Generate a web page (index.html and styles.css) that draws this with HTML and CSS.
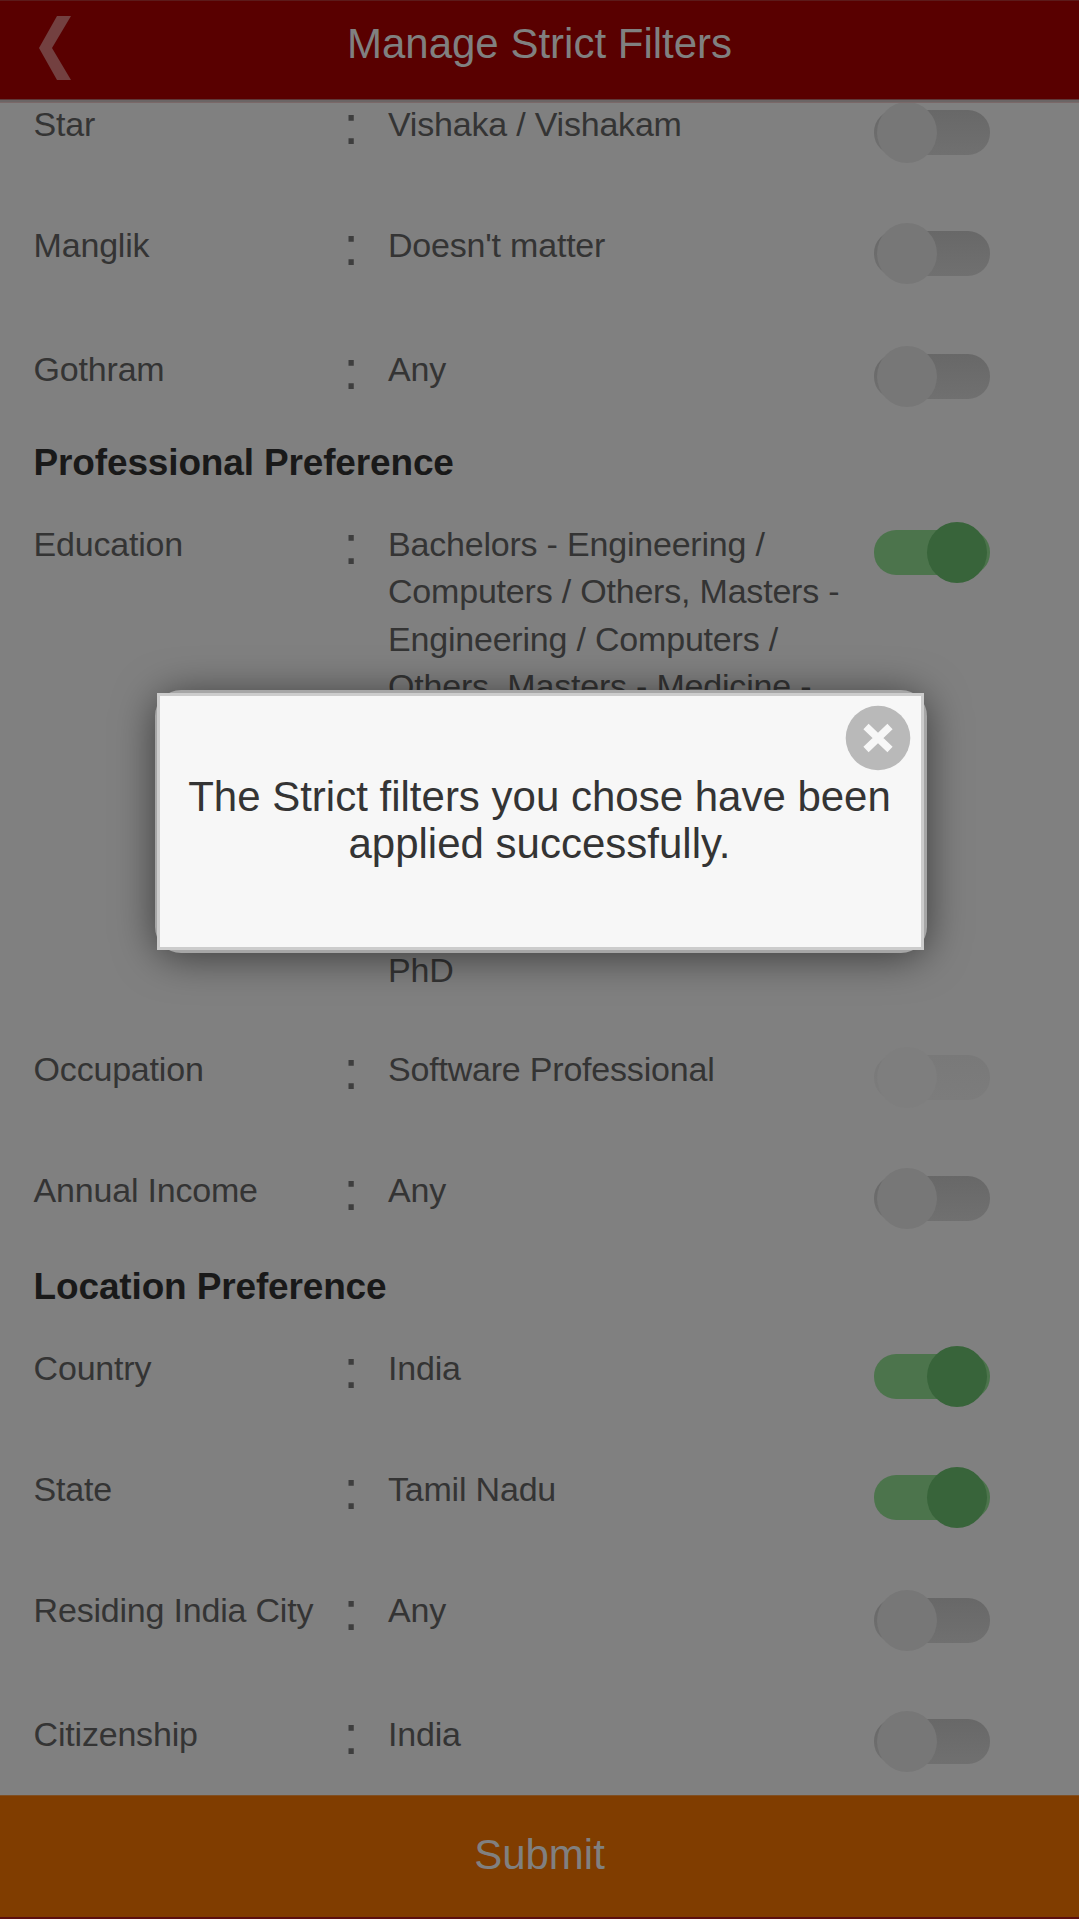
FILE: index.html
```html
<!DOCTYPE html>
<html lang="en">
<head>
<meta charset="utf-8">
<title>Manage Strict Filters</title>
<link rel="stylesheet" href="styles.css">
</head>
<body>
<div class="page">
  <header class="header">
    <svg class="back" viewBox="0 0 32 64" aria-label="Back"><path d="M18 0H32L13 32L32 64H18L0 32Z"/></svg>
    <h1 class="title">Manage Strict Filters</h1>
  </header>
  <main class="list">
    <div class="row"><span class="label">Star</span><span class="colon">:</span><span class="value">Vishaka / Vishakam</span><span class="toggle"></span></div>
    <div class="row row-tall"><span class="label">Manglik</span><span class="colon">:</span><span class="value">Doesn't matter</span><span class="toggle"></span></div>
    <div class="row row-short row-low"><span class="label">Gothram</span><span class="colon">:</span><span class="value">Any</span><span class="toggle"></span></div>
    <h2 class="heading">Professional Preference</h2>
    <div class="row row-education"><span class="label">Education</span><span class="colon">:</span><span class="value">Bachelors - Engineering /<br>Computers / Others, Masters -<br>Engineering / Computers /<br>Others, Masters - Medicine -<span class="last-line">PhD</span></span><span class="toggle on"></span></div>
    <div class="row"><span class="label">Occupation</span><span class="colon">:</span><span class="value">Software Professional</span><span class="toggle disabled"></span></div>
    <div class="row row-last"><span class="label">Annual Income</span><span class="colon">:</span><span class="value">Any</span><span class="toggle"></span></div>
    <h2 class="heading">Location Preference</h2>
    <div class="row"><span class="label">Country</span><span class="colon">:</span><span class="value">India</span><span class="toggle on"></span></div>
    <div class="row"><span class="label">State</span><span class="colon">:</span><span class="value">Tamil Nadu</span><span class="toggle on"></span></div>
    <div class="row row-tall row-high"><span class="label">Residing India City</span><span class="colon">:</span><span class="value">Any</span><span class="toggle"></span></div>
    <div class="row row-low"><span class="label">Citizenship</span><span class="colon">:</span><span class="value">India</span><span class="toggle"></span></div>
  </main>
  <button class="submit">Submit</button>
</div>
<div class="popup">
  <div class="popup-body">
    <svg class="close" viewBox="0 0 66 66" aria-label="Close"><circle cx="33" cy="33" r="32.3"/><path d="M21 21.5L45 44.5M45 21.5L21 44.5"/></svg>
    <p class="message">The Strict filters you chose have been<br>applied successfully.</p>
  </div>
</div>
</body>
</html>
```
FILE: styles.css
```css
* { box-sizing: border-box; }
body {
  margin: 0;
  background: #808080;
  color: #343434;
  font-family: "Liberation Sans", Arial, sans-serif;
  font-size: 34px;
  line-height: 47.33px;
}
h1, h2, p { margin: 0; font-weight: normal; }
.page {
  height: 1919px;
  display: flex;
  flex-direction: column;
  overflow: hidden;
}
.header {
  position: relative;
  z-index: 1;
  flex: none;
  height: 100px;
  display: grid;
  grid-template-columns: 72px 1fr 72px;
  background: #590000;
  border-top: 1px solid #5c1a1a;
  border-bottom: 1px solid #5f3838;
  box-shadow: 0 2px #6b6565, 0 3px #7a6868;
}
.back { width: 32px; height: 64px; margin: 15px 0 0 39px; fill: #734040; }
.title { text-align: center; font-size: 42px; color: #808080; padding-top: 19px; }
.list { flex: 1; min-height: 0; padding: 1px 89px 0 33.6px; }
.row {
  display: grid;
  grid-template-columns: 310px 44.4px 1fr 116px;
  align-items: start;
  height: 121px;
  letter-spacing: -0.2px;
}
.row-tall { height: 124px; }
.row-short { height: 85px; }
.row-last { height: 88px; }
.colon { font-size: 55px; line-height: 55px; height: 47px; margin-top: -3px; color: #3e3e3e; }
.value { white-space: nowrap; }
.last-line { display: block; margin-top: 236.6px; }
.heading {
  height: 90px;
  padding-top: 9px;
  font-size: 37px;
  line-height: 46px;
  font-weight: bold;
  letter-spacing: -0.15px;
  color: #191919;
}
.row-education { height: 525px; }
.toggle {
  display: block;
  position: relative;
  height: 45px;
  margin-top: 9px;
  border-radius: 22px;
  background: linear-gradient(#686868, #707070);
}
.toggle::after {
  content: "";
  position: absolute;
  left: 3px;
  top: -8px;
  width: 60px;
  height: 61px;
  border-radius: 50%;
  background: #777;
}
.row-low .toggle { margin-top: 8px; }
.row-high .toggle { margin-top: 11px; }
.toggle.on { background: #4c744c; }
.toggle.on::after { left: 53px; background: #38643a; }
.toggle.disabled { background: linear-gradient(#797979, #7c7c7c); }
.toggle.disabled::after { background: #7e7e7e; }
.submit {
  flex: none;
  height: 124px;
  border: 0;
  border-top: 1px solid #804f22;
  border-bottom: 2px solid #5c1010;
  background: #803d00;
  color: #808080;
  font: 42px "Liberation Sans", Arial, sans-serif;
  padding: 0 0 3px;
}
.popup {
  position: absolute;
  left: 155px;
  top: 690px;
  width: 772px;
  height: 263px;
  border-radius: 26px;
  background: #a6a6a6;
  padding: 3px 3px 2px 2px;
  box-shadow: 0 4px 40px rgba(0, 0, 0, .55);
}
.popup-body {
  position: relative;
  height: 257px;
  border: 3px solid #ccc;
  background: #f7f7f7;
  padding: 77px 2px 0 0;
}
.close { position: absolute; right: 10px; top: 9px; width: 66px; height: 66px; fill: #b9b9b9; }
.close path { stroke: #f7f7f7; stroke-width: 7.5; }
.message { text-align: center; font-size: 42px; color: #343434; white-space: nowrap; }
```
